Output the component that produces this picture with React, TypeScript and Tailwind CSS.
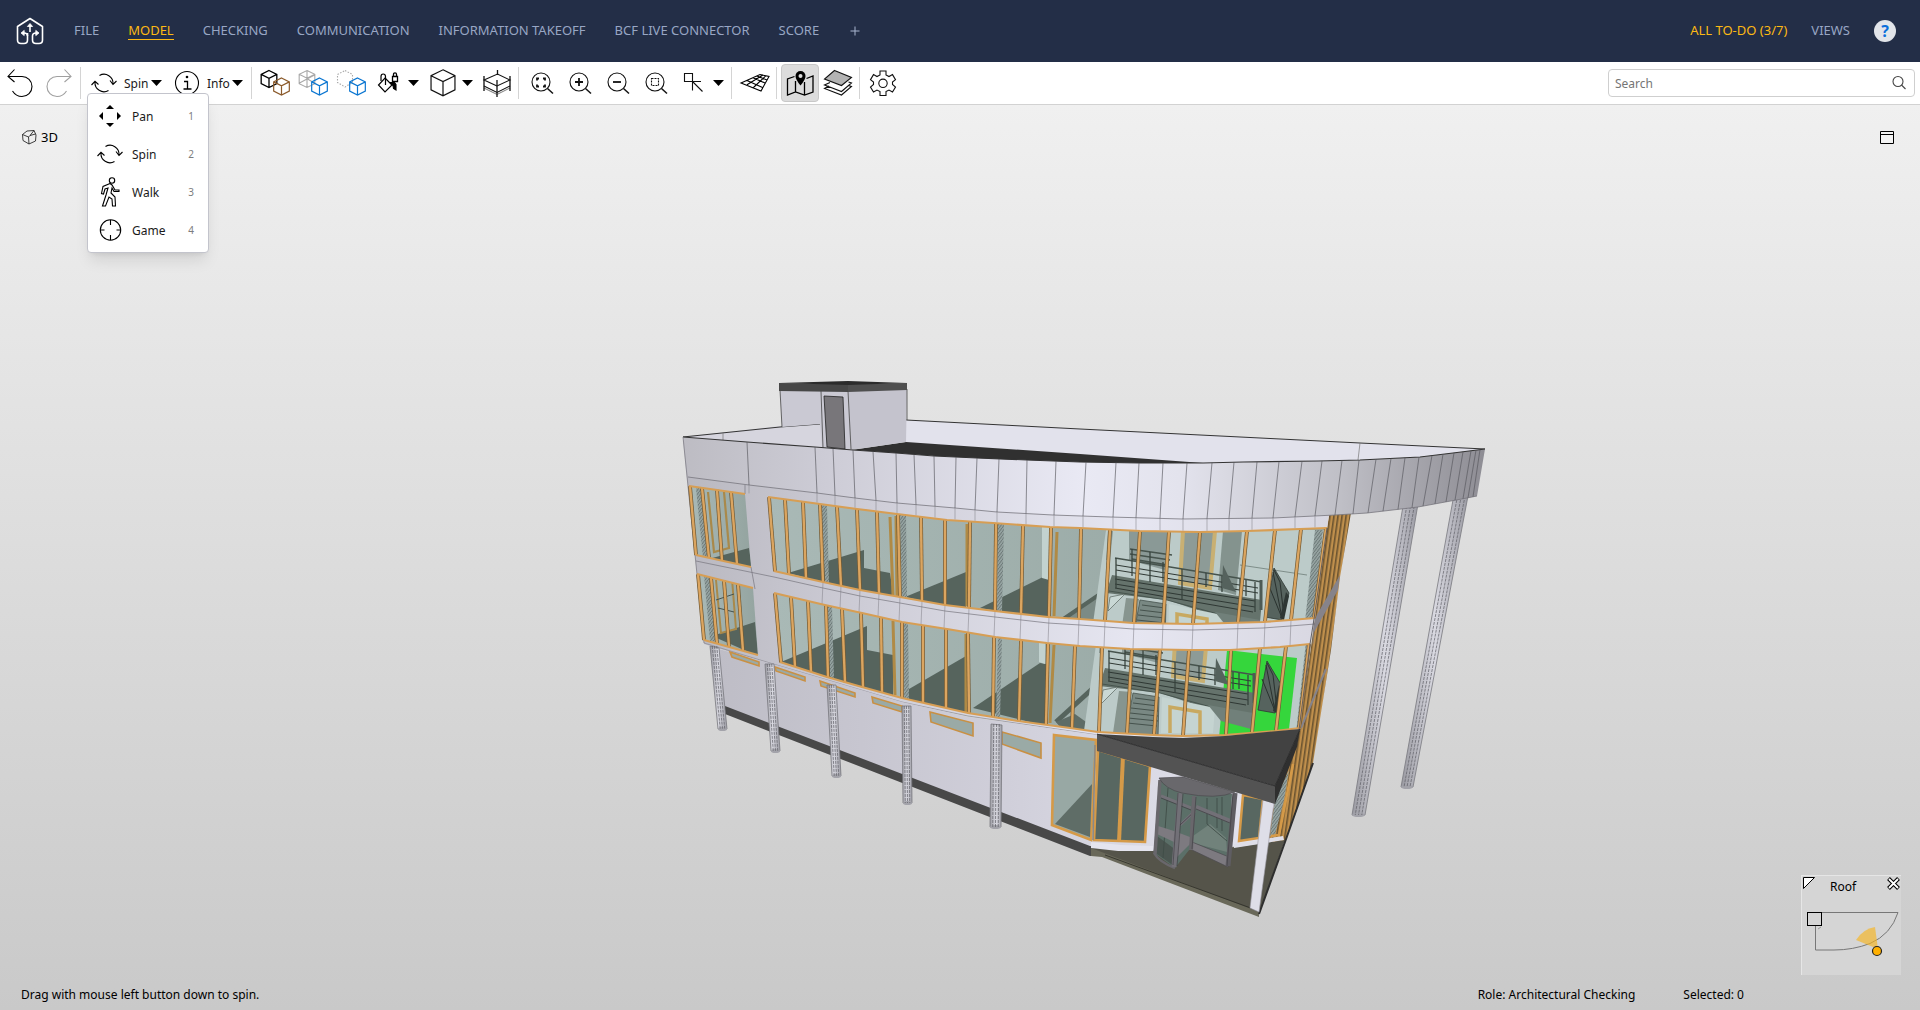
import { useState } from "react";
import type { ReactNode } from "react";
import clsx from "clsx";

type Pt = [number, number];

const navItems = ["FILE", "MODEL", "CHECKING", "COMMUNICATION", "INFORMATION TAKEOFF", "BCF LIVE CONNECTOR", "SCORE"];

/* ---------- icons ---------- */

function Icon({ size = 32, children, stroke = "#111", className }: { size?: number; children: ReactNode; stroke?: string; className?: string }) {
  return (
    <svg width={size} height={size} viewBox={`0 0 ${size} ${size}`} fill="none" stroke={stroke} strokeWidth="1.1" className={clsx("shrink-0", className)} aria-hidden="true">
      {children}
    </svg>
  );
}

function Logo() {
  return (
    <svg width="28" height="28" viewBox="0 0 28 28" fill="none" stroke="#fff" strokeWidth="1.6" strokeLinejoin="round" aria-hidden="true">
      <path d="M11.500 16v7q0 3.500-3.500 3.500H5q-3.500 0-3.500-3.500V9.500L14 1.500l12.500 8V23q0 3.500-3.500 3.500h-3q-3.500 0-3.500-3.500v-4q0-3 3.500-3" />
      <path d="M11.500 19q0-3-3.500-3M14 8v7" />
      <path d="M14 6.500l-2.600 3h5.200zM5 16l3.200-2.600v5.200zM23 16l-3.200-2.600v5.200z" fill="#fff" strokeWidth=".8" />
    </svg>
  );
}

function SpinIcon() {
  return (
    <Icon stroke="#000">
      <path d="M11.500 8.500A9 9 0 0 1 25 17M22 13.500l3 4 3.500-3.500" />
      <path d="M20.500 23.500A9 9 0 0 1 7 15M3.500 18L7 14.300l3.500 3.200" />
    </Icon>
  );
}

function PanIcon() {
  return (
    <Icon>
      <path d="M16 5l4 4h-8zM16 27l4-4h-8zM5 16l4-4v8zM27 16l-4-4v8z" fill="#000" stroke="none" />
    </Icon>
  );
}

function WalkIcon() {
  return (
    <Icon stroke="#000">
      <circle cx="18" cy="4.500" r="2.700" />
      <path d="M16 7.500l-7 3-1.500 7 2 .5 1.500-5 3-1-2 7-3.500 11h3l3.500-9 3 2 .5 7h3l-.5-9-4-4 1-5 2 3.500h5V14h-4l-3-5z" />
    </Icon>
  );
}

function GameIcon() {
  return (
    <Icon stroke="#000">
      <circle cx="16.500" cy="16" r="10.200" />
      <path d="M16.500 6v5M16.500 21v5M6.500 16h4M22.500 16h4" />
    </Icon>
  );
}

function cubePath(x: number, y: number, s: number) {
  const h = s / 2;
  const w = s * 0.46;
  const q = s / 4.400;
  return `M${x} ${y - h}L${x + w} ${y - h + q}V${y + h - q}L${x} ${y + h}L${x - w} ${y + h - q}V${y - h + q}ZM${x - w} ${y - h + q}L${x} ${y - h + q * 2}L${x + w} ${y - h + q}M${x} ${y - h + q * 2}V${y + h}`;
}

function CubePair({ kind }: { kind: "swap" | "ghost" | "hidden" }) {
  return (
    <Icon>
      {kind === "swap" && <path d={cubePath(10, 12, 17)} stroke="#000" strokeWidth="1.300" />}
      {kind === "ghost" && <path d={cubePath(10, 12, 17) + "M2.500 16l15-8M10 3.500v8M17.500 16l-7-4"} stroke="#a8a8a8" />}
      {kind === "hidden" && <path d="M10 3.500l7.500 4v8L10 20l-7.500-4.500v-8z" stroke="#a8a8a8" strokeDasharray="1.500 1.500" />}
      <path d={cubePath(22.500, 19.500, 17)} stroke={kind === "swap" ? "#8b5a2b" : "#0b76d1"} strokeWidth="1.200" />
    </Icon>
  );
}

function PaintIcon() {
  return (
    <Icon stroke="#000">
      <path d="M12 11l7 7-7 7-6.500-7z" strokeWidth="1.200" />
      <path d="M8 14V9.500Q8 7 10.200 7t2.300 2.500V18" strokeWidth="1.200" />
      <path d="M19.500 9.500h5v5h-5zM20.500 9.500V7.300q0-1.500 1.500-1.500t1.500 1.500v2.200" strokeWidth="1.300" />
      <path d="M17 15.500h4.500l1.500 2v5.500l-2.500-1.500-.5-3z" fill="#000" />
    </Icon>
  );
}

function BoxIcon() {
  return (
    <Icon>
      <path d={cubePath(16, 15.800, 26)} strokeWidth="1.200" />
    </Icon>
  );
}

function SectionIcon() {
  return (
    <Icon>
      <path d="M3 9v15M29 9v15M16.500 3v5M16 13v17" strokeWidth="1.300" />
      <path d="M3 13l13.500-6L29 13l-13 6zM3 19l13 6.500L29 19M3 13l13 6" />
      <path d="M3 21l13 6.500L29 21" opacity=".5" />
    </Icon>
  );
}

function ZoomIcon({ kind }: { kind: "fit" | "in" | "out" | "area" }) {
  return (
    <Icon>
      <circle cx="15" cy="15" r="9" />
      <path d="M21.500 21.500l5.500 5" strokeWidth="1.500" />
      {kind === "fit" && <path d="M13 11.500h-2v2M17 11.500h2v2M13 19.500h-2v-2M17 19.500h2v-2" strokeWidth="1.800" />}
      {kind === "in" && <path d="M15 11v8M11 15h8" strokeWidth="1.800" />}
      {kind === "out" && <path d="M11 15h8" strokeWidth="1.800" />}
      {kind === "area" && <path d="M11.500 11.500h7v7h-7z" strokeDasharray="2 1" />}
    </Icon>
  );
}

function SelectIcon() {
  return (
    <Icon>
      <path d="M6.500 6.500h8v8h-8zM14.500 14.500l10 10M14.500 14.500h8.500M14.500 14.500v9" />
    </Icon>
  );
}

function GridIcon() {
  return (
    <Icon stroke="#000">
      <path d="M2 16L21 7.500l9 2-8 14.500zM8 17.700L24 8M14.500 20.500L27 8.700M8 13.500l15.500 7M14 10.700l12 5.300M18 9l10 4" />
    </Icon>
  );
}

function MapIcon() {
  return (
    <Icon stroke="#000">
      <path d="M10.500 9.500L3.500 12v16l8-3 9 3 8.500-3V9l-6.500 2.500M11.500 14v11M20.500 15v13" strokeWidth="1.300" />
      <path d="M16.500 18.500q-5-6-5-9.500a5 5 0 0 1 10 0q0 3.500-5 9.500z" fill="#000" stroke="none" />
      <circle cx="16.500" cy="9" r="2" fill="#ddd" stroke="none" />
    </Icon>
  );
}

function LayersIcon() {
  return (
    <Icon>
      <path d="M8 15.500L2.500 18l17 6.500 10-8.500-3-1M7 19l-4.500 2.500 17 6.500 10-8.500-3-1" />
      <path d="M12.500 3.500l17 7-10 8-17-6.500z" fill="#b3b3b3" />
    </Icon>
  );
}

function GearIcon() {
  return (
    <Icon>
      <path d="M13 4h6v4l3 1.600 3.500-2 3 5-3 2.400v2.500l3 2.500-3 5-3.500-2L19 24.500v4h-6v-4l-3-1.500-3.500 2-3-5 3-2.500V15l-3-2.400 3-5 3.500 2L13 8z" />
      <circle cx="16" cy="16.300" r="4.200" />
    </Icon>
  );
}

/* ---------- toolbar parts ---------- */

function ToolButton({ label, active, disabled, children }: { label: string; active?: boolean; disabled?: boolean; children: ReactNode }) {
  return (
    <button
      type="button"
      aria-label={label}
      aria-pressed={active}
      disabled={disabled}
      className={clsx("flex h-[38px] w-[38px] items-center justify-center rounded-sm", active && "border border-[#c8c8c8] bg-[#dcdcdc]")}
    >
      {children}
    </button>
  );
}

function Caret() {
  return (
    <span className="flex w-4 items-center">
      <svg width="11" height="6" viewBox="0 0 11 6" aria-hidden="true">
        <path d="M0 0h11L5.500 6z" fill="#000" />
      </svg>
    </span>
  );
}

function Separator() {
  return <span className="ml-0.5 mr-1 h-8 w-px bg-[#d4d4d4]" />;
}

const modes = [
  { name: "Pan", key: "1", icon: <PanIcon /> },
  { name: "Spin", key: "2", icon: <SpinIcon /> },
  { name: "Walk", key: "3", icon: <WalkIcon /> },
  { name: "Game", key: "4", icon: <GameIcon /> },
];

function Toolbar() {
  const [mode, setMode] = useState("Spin");
  const [open, setOpen] = useState(true);

  return (
    <div className="flex h-[43px] items-center border-b border-[#d2d2d2] bg-white pl-0.5 pr-[5px] text-xs text-[#1a1a1a]">
      <ToolButton label="Undo">
        <Icon stroke="#000">
          <path d="M9.500 2.500L3 9.500l6.500 5.500M3 9.500h14a10 10 0 0 1 0 20q-6 0-9.500-5.500" />
        </Icon>
      </ToolButton>
      <ToolButton label="Redo" disabled>
        <Icon stroke="#a0a0a0">
          <path d="M21.500 2.500l6.500 7-6.500 5.500M28 9.500H14a10 10 0 0 0 0 20q6 0 9.500-5.500" />
        </Icon>
      </ToolButton>
      <Separator />
      <div className="relative">
        <button type="button" aria-haspopup="menu" aria-expanded={open} onClick={() => setOpen(!open)} className="flex h-[38px] items-center">
          <span className="flex w-[38px] justify-center"><SpinIcon /></span>
          <span className="w-7 pl-px pt-0.5 text-left">{mode}</span>
          <Caret />
        </button>
        {open && (
          <ul role="menu" className="absolute left-0.5 top-[29px] z-10 w-[122px] rounded border border-[#c3c4cc] bg-white py-[3px] shadow-lg">
            {modes.map((m) => (
              <li key={m.name} role="none">
                <button type="button" role="menuitem" onClick={() => { setMode(m.name); setOpen(false); }} className="flex h-[38px] w-full items-center pl-1.5 pr-3.5">
                  {m.icon}
                  <span className="ml-1.5 pt-0.5">{m.name}</span>
                  <span className="ml-auto pt-0.5 text-[10px] text-[#7d7d7d]">{m.key}</span>
                </button>
              </li>
            ))}
          </ul>
        )}
      </div>
      <button type="button" className="ml-px flex h-[38px] items-center">
        <span className="flex w-[38px] justify-center">
          <Icon stroke="#000">
            <circle cx="16" cy="16" r="11.500" />
            <path d="M13 14.500h3.500V22M12.500 22h8" strokeWidth="1.300" />
            <circle cx="16" cy="10" r="1.300" fill="#000" stroke="none" />
          </Icon>
        </span>
        <span className="w-[26px] pl-px pt-0.5 text-left">Info</span>
        <Caret />
      </button>
      <span className="w-px" />
      <Separator />
      <ToolButton label="Add selection to basket"><CubePair kind="swap" /></ToolButton>
      <ToolButton label="Make others transparent"><CubePair kind="ghost" /></ToolButton>
      <ToolButton label="Hide others"><CubePair kind="hidden" /></ToolButton>
      <ToolButton label="Colouring"><PaintIcon /></ToolButton>
      <Caret />
      <ToolButton label="View direction"><BoxIcon /></ToolButton>
      <Caret />
      <ToolButton label="Section box"><SectionIcon /></ToolButton>
      <Separator />
      <ToolButton label="Zoom to fit"><ZoomIcon kind="fit" /></ToolButton>
      <ToolButton label="Zoom in"><ZoomIcon kind="in" /></ToolButton>
      <ToolButton label="Zoom out"><ZoomIcon kind="out" /></ToolButton>
      <ToolButton label="Zoom to area"><ZoomIcon kind="area" /></ToolButton>
      <ToolButton label="Markup"><SelectIcon /></ToolButton>
      <Caret />
      <Separator />
      <ToolButton label="Grid"><GridIcon /></ToolButton>
      <Separator />
      <ToolButton label="Navigation map" active><MapIcon /></ToolButton>
      <ToolButton label="Layers"><LayersIcon /></ToolButton>
      <Separator />
      <ToolButton label="Settings"><GearIcon /></ToolButton>
      <label className="ml-auto flex h-7 w-[307px] items-center rounded border border-[#cfcfcf] px-1.5">
        <input type="text" placeholder="Search" aria-label="Search" className="min-w-0 flex-1 pt-0.5 outline-none placeholder:text-[#757575]" />
        <Icon size={18} stroke="#444">
          <circle cx="8" cy="7.500" r="5" />
          <path d="M11.500 11l4 4" />
        </Icon>
      </label>
    </div>
  );
}

/* ---------- 3D model ---------- */

const pts = (p: Pt[]) => p.map((q) => q.join(",")).join(" ");

// y on a polyline at x
function yAt(line: Pt[], x: number) {
  for (let i = 1; i < line.length; i++) {
    if (x <= line[i][0] || i === line.length - 1) {
      const [ax, ay] = line[i - 1];
      const [bx, by] = line[i];
      return ay + ((x - ax) / (bx - ax)) * (by - ay);
    }
  }
  return line[0][1];
}

const roofTop: Pt[] = [[683, 437], [747, 442], [815, 447], [853, 450], [896, 453], [934, 456], [977, 458], [1027, 460], [1080, 462], [1140, 463], [1203, 463], [1243, 462], [1318, 461], [1360, 460], [1420, 457], [1453, 453], [1485, 449]];
const roofBottom: Pt[] = [[688, 477], [749, 485], [817, 493], [855, 498], [897, 503], [955, 508], [997, 512], [1053, 515], [1110, 517], [1182, 519], [1273, 518], [1335, 515], [1367, 513], [1418, 507], [1467, 498], [1477, 496]];
const roofJoints: Pt[] = [[747, 749], [815, 817], [833, 835], [853, 855], [873, 876], [896, 897], [914, 916], [934, 935], [956, 955], [977, 975], [999, 997], [1027, 1026], [1056, 1054], [1086, 1083], [1116, 1113], [1139, 1136], [1163, 1160], [1187, 1183], [1212, 1207], [1234, 1229], [1257, 1252], [1279, 1273], [1302, 1295], [1322, 1315], [1342, 1335], [1359, 1353], [1376, 1368], [1391, 1383], [1405, 1398], [1419, 1412], [1432, 1423], [1443, 1435], [1454, 1446], [1463, 1455], [1471, 1463], [1476, 1468], [1480, 1473]];

const upperTop: Pt[] = [[768, 497], [820, 504], [857, 509], [897, 514], [947, 520], [993, 523], [1050, 527], [1080, 528], [1140, 531], [1200, 532], [1247, 531], [1300, 529], [1327, 528]];
const upperBottom: Pt[] = [[774, 571], [823, 582], [860, 590], [900, 597], [945, 605], [995, 611], [1048, 617], [1080, 619], [1133, 623], [1193, 624], [1263, 622], [1290, 620], [1315, 618]];
const upperBars: Pt[] = [[769, 775], [785, 789], [803, 806], [820, 823], [837, 841], [857, 860], [877, 879], [898, 900], [921, 922], [945, 945], [970, 969], [996, 995], [1023, 1021], [1051, 1049], [1081, 1079], [1110, 1105], [1140, 1134], [1169, 1163], [1200, 1193], [1247, 1238], [1275, 1265], [1301, 1291], [1326, 1314]];

const lowerTop: Pt[] = [[774, 593], [825, 605], [862, 613], [902, 622], [947, 629], [995, 637], [1047, 643], [1080, 646], [1130, 649], [1190, 650], [1230, 650], [1280, 647], [1310, 644]];
const lowerBottom: Pt[] = [[780, 662], [827, 677], [862, 687], [902, 698], [968, 713], [1018, 721], [1070, 728], [1098, 732], [1153, 735], [1183, 736], [1225, 735], [1275, 731], [1300, 728]];
const lowerBars: Pt[] = [[775, 781], [791, 795], [808, 811], [826, 828], [842, 845], [861, 863], [881, 882], [902, 902], [923, 923], [946, 946], [968, 969], [994, 993], [1021, 1019], [1048, 1046], [1075, 1072], [1102, 1099], [1132, 1127], [1160, 1154], [1189, 1183], [1231, 1226], [1260, 1252], [1286, 1276], [1309, 1299]];

function WindowBand({ id, top, bottom, bars, children }: { id: string; top: Pt[]; bottom: Pt[]; bars: Pt[]; children?: ReactNode }) {
  const outline = pts([...top, ...[...bottom].reverse()]);
  return (
    <g>
      <clipPath id={id}><polygon points={outline} /></clipPath>
      <polygon points={outline} fill="url(#glass)" />
      <g clipPath={`url(#${id})`}>{children}</g>
      {bars.map(([a, b]) => (
        <g key={a}>
          <line x1={a} y1={yAt(top, a)} x2={b} y2={yAt(bottom, b)} stroke="#735a34" strokeWidth="3.800" />
          <line x1={a} y1={yAt(top, a)} x2={b} y2={yAt(bottom, b)} stroke="#dba560" strokeWidth="2.400" />
        </g>
      ))}
      <polyline points={pts(top)} fill="none" stroke="#d79e54" strokeWidth="2.200" />
      <polyline points={pts(bottom)} fill="none" stroke="#d79e54" strokeWidth="2.200" />
    </g>
  );
}

// stair landing with railing behind the curved glass
function Gallery({ dx, dy, marked }: { dx: number; dy: number; marked?: boolean }) {
  return (
    <g transform={`translate(${dx} ${dy})`}>
      <polygon points="1106,530 1340,530 1330,645 1090,645" fill="#bccbc9" />
      <polygon points="1108,531 1113,531 1110,560 1106,560" fill="#8a9996" />
      <polygon points="1129,531 1168,531 1165,570 1129,560" fill="#8a9996" />
      {marked ? (
        <polygon points="1234,557 1304,565 1295,645 1226,645" fill="#35d63c" />
      ) : (
        <polygon points="1223,531 1242,531 1236,595 1218,590" fill="#84938e" />
      )}
      <polygon points="1183,531 1215,531 1210,588 1180,583" fill="#8d9b97" stroke="#c8b073" strokeWidth="4" />
      {!marked && <path d="M1240 565l67 10" stroke="#6e7d79" strokeWidth=".8" />}
      <polygon points="1112,575 1262,600 1260,622 1240,624 1167,600 1106,593" fill="#65736c" />
      <path d="M1109 591l58 9 73 20" fill="none" stroke="#3f4c46" strokeWidth=".8" />
      <polygon points="1110,597 1125,594 1108,611" fill="#c9d8d5" stroke="#59665f" strokeWidth=".7" />
      <polygon points="1126,598 1139,599 1134,640 1120,640" fill="#87958f" />
      <path d="M1140 600l26 4-1 40h-33z" fill="#798883" stroke="#46534e" strokeWidth=".8" />
      <path d="M1142 605l23 3M1140 610l25 3M1138 615l27 3M1137 620l28 3M1135 625l30 3M1134 630l30 3" stroke="#3f4c46" strokeWidth=".9" />
      <polygon points="1169,604 1222,615 1220,640 1168,640" fill="#c5d4d1" />
      <path d="M1177 640v-26l30 5v22" fill="none" stroke="#c8a960" strokeWidth="3.500" />
      <polygon points="1215,612 1260,620 1258,636 1228,628" fill="#71807a" />
      <path d="M1130 549l42 6M1130 554l40 6M1132 559l36 6M1115 558l147 24" stroke="#46534d" strokeWidth="1.400" fill="none" />
      <path d="M1116 565l142 23M1116 570l142 23M1115 579l140 22M1115 584l140 23M1115 588l138 24" stroke="#2f3834" strokeWidth="1" fill="none" />
      <path d="M1116 558v30M1132 549v27M1150 552v30M1163 562v20M1182 569v31M1206 573v14M1222 576v16M1240 579v17M1246 580v16M1255 582v30" stroke="#39443f" strokeWidth="1.300" />
      <path d="M1261 580v30" stroke="#4d5a55" strokeWidth="3" />
      <path d="M1223 565l13 27-14-4z" fill="#55625d" />
      <polygon points="1274,568 1289,593 1282,620 1265,617" fill="#56635e" stroke="#2e3734" strokeWidth=".8" />
      <path d="M1273 572l9 46M1269 586l13 32M1274 570l6 12 3 26" stroke="#2a322f" strokeWidth="1" fill="none" />
      <polygon points="1289,596 1286,592 1280,618 1284,620" fill="#2e3734" />
      <polygon points="1315,530 1323,530 1311,640 1303,640" fill="url(#mesh)" />
    </g>
  );
}

function Column({ p }: { p: [Pt, Pt, Pt, Pt] }) {
  const [a, b, c, d] = p;
  return (
    <g>
      <polygon points={pts(p)} fill="url(#column)" stroke="#77777e" strokeWidth=".8" />
      <ellipse cx={(c[0] + d[0]) / 2} cy={(c[1] + d[1]) / 2} rx={(c[0] - d[0]) / 2} ry="2" fill="#a3a3aa" />
      {[0.25, 0.500, 0.750].map((t) => (
        <line key={t} x1={a[0] + (b[0] - a[0]) * t} y1={a[1]} x2={d[0] + (c[0] - d[0]) * t} y2={d[1]} stroke="#5f5f66" strokeWidth=".7" strokeDasharray="3 1" />
      ))}
    </g>
  );
}

const groundColumns: [Pt, Pt, Pt, Pt][] = [
  [[710, 646], [719, 648], [727, 729], [718, 729]],
  [[765, 664], [774, 664], [780, 751], [771, 751]],
  [[827, 685], [836, 685], [841, 776], [832, 776]],
  [[902, 706], [911, 706], [912, 803], [903, 803]],
  [[991, 724], [1002, 725], [1001, 827], [990, 827]],
];

const cellarWindows: Pt[][] = [
  [[730, 652], [759, 662], [759, 666], [732, 657]],
  [[775, 667], [805, 677], [805, 681], [776, 671]],
  [[820, 681], [855, 693], [855, 697], [821, 686]],
  [[872, 697], [902, 706], [902, 712], [873, 703]],
  [[930, 712], [973, 723], [973, 736], [931, 722]],
  [[1002, 732], [1041, 743], [1041, 758], [1002, 744]],
];

function RevolvingDoor() {
  return (
    <g>
      <polygon points="1159,780 1232,794 1229,866 1193,845 1175,868 1154,853" fill="#5b6f68" />
      <polygon points="1193,836 1210,824 1226,838 1227,852 1193,843" fill="#71827b" />
      <polygon points="1157,836 1176,850 1174,866 1154,852" fill="#4b5651" />
      <path d="M1207 798v26l20 17M1217 798v30M1222 797v34" fill="none" stroke="#3f4d47" strokeWidth=".9" />
      <path d="M1168 788l-5 70" stroke="#3f4d47" strokeWidth=".9" />
      <path d="M1161 796l30 12M1180 825l15-14" stroke="#727077" strokeWidth="3" />
      <path d="M1196 807l34 14" stroke="#727077" strokeWidth="4.500" />
      <path d="M1180 825l15-14M1161 798l30 12M1196 809l34 14" stroke="#3c3b3f" strokeWidth=".7" />
      <polygon points="1158,826 1174,831 1190,837 1190,844 1176,858 1174,842 1157,834" fill="#7d7a80" />
      <polygon points="1192,842 1229,857 1228,867 1192,850" fill="#7d7a80" stroke="#4a494d" strokeWidth=".7" />
      <path d="M1160 780l-5 74" stroke="#69676c" strokeWidth="3.500" />
      <path d="M1154 853q5 9 21 15" fill="none" stroke="#69676c" strokeWidth="2.500" />
      <path d="M1194 796l-3 54" stroke="#69676c" strokeWidth="4" />
      <path d="M1180 793l-6 74" stroke="#727077" strokeWidth="5" />
      <path d="M1235 793l-7 73" stroke="#5f5d62" strokeWidth="5" />
      <path d="M1183 794l-6 72M1178 793l-5 72M1233 794l-6 72M1196 797l-4 52" stroke="#3c3b3f" strokeWidth=".6" />
      <path d="M1159 778l24-1 52 15q-18 8-53 1-17-4-23-15z" fill="#69686c" stroke="#4a494d" strokeWidth=".7" />
    </g>
  );
}

function Building() {
  return (
    <svg className="absolute inset-0 h-full w-full" viewBox="0 105 1920 905" role="img" aria-label="3D building model">
      <defs>
        <linearGradient id="parapet" gradientUnits="userSpaceOnUse" x1="683" y1="0" x2="1485" y2="0">
          <stop offset="0" stopColor="#bdbcc3" />
          <stop offset=".18" stopColor="#cdccd6" />
          <stop offset=".5" stopColor="#e9e9f4" />
          <stop offset=".62" stopColor="#e3e3ed" />
          <stop offset=".82" stopColor="#bfbfc6" />
          <stop offset="1" stopColor="#8e8d94" />
        </linearGradient>
        <linearGradient id="wall" gradientUnits="userSpaceOnUse" x1="683" y1="0" x2="1330" y2="0">
          <stop offset="0" stopColor="#b9b8c0" />
          <stop offset=".3" stopColor="#cfced8" />
          <stop offset=".7" stopColor="#e6e6f1" />
          <stop offset="1" stopColor="#d8d7e1" />
        </linearGradient>
        <linearGradient id="ground" gradientUnits="userSpaceOnUse" x1="715" y1="0" x2="1300" y2="0">
          <stop offset="0" stopColor="#bebdc6" />
          <stop offset=".5" stopColor="#d0cfda" />
          <stop offset="1" stopColor="#e6e6f1" />
        </linearGradient>
        <linearGradient id="glass" x1="0" y1="0" x2="1" y2="0">
          <stop offset="0" stopColor="#a9b9b6" />
          <stop offset="1" stopColor="#94a4a0" />
        </linearGradient>
        <linearGradient id="column" x1="0" y1="0" x2="1" y2="0">
          <stop offset="0" stopColor="#9a9aa1" />
          <stop offset=".5" stopColor="#d9d9e1" />
          <stop offset="1" stopColor="#9c9ca4" />
        </linearGradient>
        <pattern id="slats" width="4" height="40" patternUnits="userSpaceOnUse" patternTransform="rotate(8)">
          <rect width="4" height="40" fill="#bf8f4c" />
          <rect width="1.600" height="40" fill="#6a5330" />
        </pattern>
        <pattern id="mesh" width="3" height="4" patternUnits="userSpaceOnUse">
          <rect width="3" height="4" fill="#93a19f" />
          <path d="M0 4l3-4" stroke="#5f6c6b" strokeWidth=".8" />
        </pattern>
      </defs>

      {/* tall columns under the roof tip */}
      <Column p={[[1403, 506], [1418, 504], [1365, 815], [1352, 815]]} />
      <Column p={[[1453, 500], [1468, 496], [1413, 787], [1401, 787]]} />

      {/* roof surface and far parapet */}
      <polygon points="683,437 780,426 822,424 822,450" fill="#d6d5de" />
      <polygon points="906,420 1080,429 1360,443 1485,449 1420,457 1318,462 1203,464 1080,462 906,452" fill="#e2e2ec" />
      <polyline points="683,437 780,427 820,424" fill="none" stroke="#333" />
      <polyline points="906,420 1080,429 1360,443 1485,449" fill="none" stroke="#333" />
      <path d="M1360 443l-2 17M723 433v7" stroke="#777" strokeWidth=".7" />
      <polygon points="851,450 906,442 1080,454 1203,463 1080,463 977,459" fill="#303030" />

      {/* penthouse */}
      <polygon points="780,390 848,391 851,450 822,448 820,424 782,427" fill="#cac9d3" />
      <polygon points="848,391 907,389 906,442 851,450" fill="#c4c3cd" />
      <polygon points="824,396 843,397 845,449 827,447" fill="#78767a" stroke="#222" strokeWidth=".8" />
      <path d="M780 390l2 37M821 391l2 57M848 391l3 58M907 389l0 31" stroke="#444" strokeWidth=".8" fill="none" />
      <polygon points="779,383 848,384 848,392 779,391" fill="#474747" />
      <polygon points="848,384 907,383 907,390 848,392" fill="#4f4f4f" />
      <polygon points="779,383 848,381 907,383 848,385" fill="#2b2b2b" />

      {/* timber side wall */}
      <polygon points="1329,514 1351,513 1340,577 1331,650 1313,763 1285,842 1262,842 1300,728 1315,618" fill="url(#slats)" />
      <polygon points="1340,575 1338,590 1313,634 1315,618" fill="#86838a" />
      <polyline points="1326,669 1301,728" fill="none" stroke="#86838a" strokeWidth="2" />

      {/* main wall */}
      <polygon points="683,440 1080,470 1330,510 1327,528 1315,618 1310,644 1300,731 1098,738 902,704 704,644" fill="url(#wall)" />
      <polyline points="1098,735 968,716 902,702 780,666 704,643" fill="none" stroke="#8b8a92" strokeWidth=".7" />

      {/* ground floor wall */}
      <polygon points="715,648 780,666 902,702 968,717 1098,735 1265,740 1286,770 1262,842 1236,846 1152,850 1091,848 725,707" fill="url(#ground)" />
      <polygon points="725,706 1090,846 1150,852 1090,856 725,714" fill="#484848" />

      {/* parapet */}
      <polygon points={pts([...roofTop, ...[...roofBottom].reverse()])} fill="url(#parapet)" />
      <polyline points={pts(roofTop)} fill="none" stroke="#333" strokeWidth="1.100" />
      <polyline points={pts(roofBottom)} fill="none" stroke="#77767e" strokeWidth=".8" />
      {roofJoints.map(([a, b]) => (
        <line key={a} x1={a} y1={yAt(roofTop, a)} x2={b} y2={yAt(roofBottom, b)} stroke="#55555c" strokeWidth=".8" opacity=".8" />
      ))}
      {roofJoints.slice(0, 24).map(([, b]) => (
        <line key={b} x1={b} y1={yAt(roofBottom, b)} x2={b} y2={yAt(upperTop, b) - 1} stroke="#8b8a92" strokeWidth=".6" />
      ))}
      {upperBars.slice(3).map(([, b]) => (
        <line key={b} x1={b} y1={yAt(upperBottom, b)} x2={b - 1} y2={yAt(lowerTop, b)} stroke="#8b8a92" strokeWidth=".6" />
      ))}
      <polyline points={"696,561 " + pts(upperBottom.map(([x, y]) => [x, y + 6] as Pt))} fill="none" stroke="#77767e" strokeWidth=".7" />
      <path d="M683 437L704 643M745 485v9M751 567l4 22" stroke="#77767e" strokeWidth=".7" />

      {/* corner windows */}
      <WindowBand id="cornerUpper" top={[[689, 486], [745, 494]]} bottom={[[696, 555], [751, 567]]} bars={[[690, 696], [702, 709], [717, 722], [731, 737]]}>
        <polygon points="705,560 749,548 752,570" fill="#56645d" />
        <polygon points="696,488 702,488 710,560 703,558" fill="url(#mesh)" />
        <path d="M708 492l6 60 15-4-5-56" fill="none" stroke="#a9894a" strokeWidth="2.200" />
      </WindowBand>
      <WindowBand id="cornerLower" top={[[697, 574], [753, 588]]} bottom={[[704, 640], [758, 655]]} bars={[[698, 704], [711, 717], [724, 729], [738, 743]]}>
        <polygon points="712,636 755,622 758,656" fill="#56645d" />
        <polygon points="704,575 710,575 717,642 710,641" fill="url(#mesh)" />
        <path d="M716 580l5 53 15-4-4-50" fill="none" stroke="#a9894a" strokeWidth="2" />
        <path d="M716 600l18-6M718 608l16 4" stroke="#46534e" />
      </WindowBand>

      {/* upper floor */}
      <WindowBand id="upper" top={upperTop} bottom={upperBottom} bars={upperBars}>
        <polygon points="788,573 864,550 864,568 890,573 894,600 860,592" fill="#56645d" />
        <polygon points="905,597 966,572 966,610" fill="#56645d" />
        <polygon points="980,608 1043,577 1050,578 1050,620" fill="#56645d" />
        <polygon points="1042,526 1049,527 1049,580 1042,578" fill="#c2d2cf" />
        <polygon points="1080,610 1106,590 1106,622 1060,620" fill="#7c8b86" />
        <path d="M1062 620l44-30" stroke="#56645d" strokeWidth="4" />
        <polygon points="821,505 827,506 829,583 825,582" fill="url(#mesh)" />
        <polygon points="900,515 906,516 907,598 902,597" fill="url(#mesh)" />
        <polygon points="998,524 1004,524 1002,611 997,611" fill="url(#mesh)" />
        <path d="M890 517l3 78M896 516l1 80M967 524v82M1057 532l-3 84" stroke="#b08a45" strokeWidth="3" />
        <Gallery dx={0} dy={0} />
      </WindowBand>

      {/* lower floor */}
      <WindowBand id="lower" top={lowerTop} bottom={lowerBottom} bars={lowerBars}>
        <polygon points="781,662 867,626 867,650 893,655 893,697 862,688" fill="#56645d" />
        <polygon points="909,689 966,656 966,714 905,700" fill="#56645d" />
        <polygon points="973,708 1040,663 1046,664 1046,726" fill="#56645d" />
        <polygon points="1039,642 1045,643 1045,664 1039,662" fill="#c2d2cf" />
        <path d="M1056 722l46-42" stroke="#56645d" strokeWidth="5" />
        <polygon points="1056,722 1075,714 1100,732 1060,727" fill="#5e6c66" />
        <polygon points="827,605 832,606 834,678 830,677" fill="url(#mesh)" />
        <polygon points="903,622 908,623 909,699 904,698" fill="url(#mesh)" />
        <polygon points="998,637 1002,637 1000,719 996,718" fill="url(#mesh)" />
        <path d="M893 621l2 74M966 634v78M1054 645l-4 78" stroke="#b08a45" strokeWidth="3" />
        <Gallery dx={-7} dy={93} marked />
      </WindowBand>
      <polyline points="1327,528 1314,619 1310,644 1299,730" fill="none" stroke="#57565c" strokeWidth=".9" />

      {/* cellar windows */}
      {cellarWindows.map((w, i) => (
        <polygon key={i} points={pts(w)} fill="#9aaaa6" stroke="#c99043" strokeWidth="1.600" />
      ))}
      {groundColumns.map((c, i) => <Column key={i} p={c} />)}

      {/* terrace */}
      <polygon points="1091,848 1150,851 1236,847 1285,840 1259,914 1105,857" fill="#55544a" />
      <polygon points="1091,848 1259,912 1259,917 1102,857 1091,856" fill="#696859" />
      <path d="M1105 855l154 56" stroke="#2c2c26" strokeWidth=".8" />
      <polyline points="1313,763 1285,842 1259,914" fill="none" stroke="#2e2e2e" strokeWidth="2" />

      {/* entrance glazing */}
      <polygon points="1054,735 1096,740 1091,840 1052,825" fill="#98a8a4" stroke="#d59a48" strokeWidth="2.600" />
      <polygon points="1055,824 1092,784 1090,837" fill="#5f6d67" />
      <polygon points="1098,750 1150,766 1145,842 1094,840" fill="#586761" stroke="#d59a48" strokeWidth="2.600" />
      <path d="M1123 756l-4 86" stroke="#d59a48" strokeWidth="4" />
      <path d="M1095 745l-2 95" stroke="#888" strokeWidth="1.500" />
      <polygon points="1243,795 1263,799 1259,838 1239,841" fill="#586761" stroke="#d59a48" strokeWidth="2.500" />
      <polygon points="1289,770 1284,800 1275,835 1270,836 1275,800" fill="url(#mesh)" />
      <path d="M1293 764l-14 71-8 1" fill="none" stroke="#d59a48" strokeWidth="2.500" />
      <polygon points="1234,844 1283,836 1284,840 1234,848" fill="#dedee8" />
      <path d="M1091 842l30 3 32 1v5h-35l-27-3z" fill="#e4e4ee" />

      <RevolvingDoor />

      {/* canopy and post */}
      <polygon points="1263,800 1274,803 1259,912 1250,908" fill="#dedee8" stroke="#9a99a2" strokeWidth=".6" />
      <polygon points="1097,734 1153,737 1183,738 1225,736 1300,729 1275,786" fill="#424242" />
      <polygon points="1097,734 1275,786 1275,804 1097,751" fill="#535353" />
      <polygon points="1300,729 1297,747 1275,804 1275,786" fill="#2f2f2f" />
      <polyline points="1097,734 1275,786 1300,729" fill="none" stroke="#222" strokeWidth=".8" />
    </svg>
  );
}

/* ---------- page ---------- */

function MiniMap() {
  return (
    <section aria-label="Navigation map" className="mr-[19px] w-[100px] border-l border-t border-[#e6e6e6] bg-[#d5d5d5]">
      <header className="flex h-6 items-start justify-between px-px text-xs text-black">
        <button type="button" aria-label="Dock map" className="pt-px">
          <svg width="12" height="12" viewBox="0 0 12 12" aria-hidden="true"><path d="M.5.5h11L.5 11.500z" fill="#fff" stroke="#000" /></svg>
        </button>
        <span className="pr-4 pt-px leading-5">Roof</span>
        <button type="button" aria-label="Close map" className="pt-px">
          <svg width="13" height="13" viewBox="0 0 13 13" fill="none" aria-hidden="true">
            <path d="M1.500 1.500l10 10M11.500 1.500l-10 10" stroke="#000" strokeWidth="4" />
            <path d="M2 2l9 9M11 2l-9 9" stroke="#fff" strokeWidth="1.800" />
          </svg>
        </button>
      </header>
      <svg width="99" height="75" viewBox="0 0 99 75" className="block" aria-hidden="true">
        <path d="M13.500 12.500H96q-7 22-28 31-17 6.500-36 6.500H13.500z" fill="none" stroke="#777" />
        <rect x="5.500" y="12.500" width="14" height="13" fill="#d5d5d5" stroke="#000" />
        <path d="M16 29l3-2" stroke="#999" />
        <path d="M76 49L54 40q7-11 19-13z" fill="#f8b620" opacity=".65" />
        <circle cx="75" cy="51" r="4.500" fill="#ffb000" stroke="#222" strokeWidth="1.200" />
      </svg>
    </section>
  );
}

export default function App() {
  const [tab, setTab] = useState("MODEL");

  return (
    <div className="flex min-h-screen flex-col font-['Noto_Sans',sans-serif]">
      <header className="flex h-[62px] items-center bg-[#232e47] pl-4 pr-6 text-[13px] text-[#98a6c4]">
        <Logo />
        <nav className="ml-[30px] flex items-center gap-[29px]">
          {navItems.map((item) => (
            <button
              key={item}
              type="button"
              onClick={() => setTab(item)}
              className={clsx("border-b leading-[17px]", item === tab ? "border-[#fdb913] text-[#fdb913]" : "border-transparent")}
            >
              {item}
            </button>
          ))}
          <button type="button" aria-label="Add tab" className="ml-0.5">
            <svg width="10" height="10" viewBox="0 0 10 10" aria-hidden="true"><path d="M5 .5v9M.5 5h9" stroke="#a9b5d0" /></svg>
          </button>
        </nav>
        <div className="ml-auto flex items-center gap-6">
          <button type="button" className="text-[#fdb913]">ALL TO-DO (3/7)</button>
          <button type="button">VIEWS</button>
          <button type="button" aria-label="Help" className="h-[22px] w-[22px] rounded-full bg-[#e2e5ea] text-base font-bold leading-[22px] text-[#0b6fdb]">?</button>
        </div>
      </header>

      <Toolbar />

      <main className="relative flex flex-1 flex-col bg-linear-to-b from-[#f0f0f0] to-[#c9c9c9] text-xs text-black">
        <Building />
        <div className="relative flex items-center justify-between pl-[21px] pr-[26px] pt-[22px]">
          <h1 className="flex items-center gap-1 text-[13px] leading-5">
            <Icon size={16}>
              <path d="M1.500 5.500L6 2l7-.5 2 4.500-.5 6L8 15l-6-3.500zM1.500 5.500L7.500 8 9 6.500 14.500 5M7.500 8L8 15M9 6.500L13 1.500" strokeWidth=".8" />
            </Icon>
            3D
          </h1>
          <button type="button" aria-label="Maximize view">
            <svg width="14" height="13" viewBox="0 0 14 13" aria-hidden="true">
              <path d="M.5.5h13v12H.5zM.5 3.500h13" fill="#f4f4f4" stroke="#000" />
            </svg>
          </button>
        </div>
        <div className="relative mt-auto flex justify-end"><MiniMap /></div>
        <footer className="relative flex h-[35px] items-center pl-[21px] pr-44 pt-1">
          <p>Drag with mouse left button down to spin.</p>
          <p className="ml-auto">Role: Architectural Checking</p>
          <p className="ml-12">Selected: 0</p>
        </footer>
      </main>
    </div>
  );
}
